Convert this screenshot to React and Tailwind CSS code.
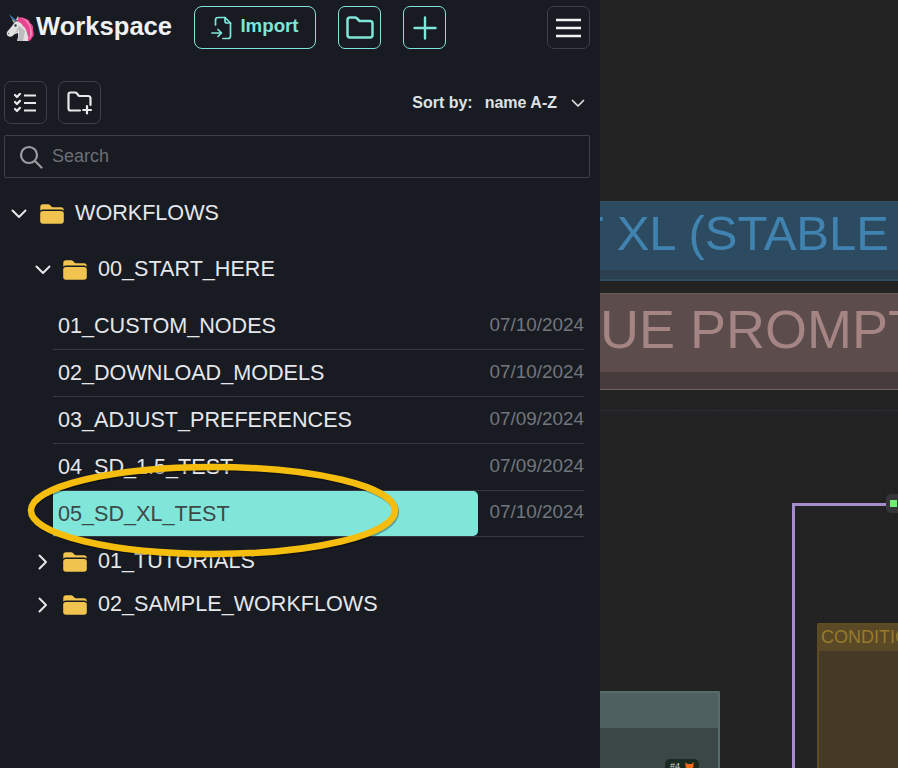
const Unicorn = () => (
  <svg width="30" height="30" viewBox="0 0 30 30" className="shrink-0">
    <path d="M9.5 11 L4 1 L12 8 Z" fill="#3f7fb0" />
    <path d="M8.5 9.5 L7 7 L10 8.5 Z" fill="#e8b44a" />
    <path d="M11 7 L13 3 L15 8 Z" fill="#e2e2e2" />
    <path d="M12 8 Q8 10 7 13 L2 19 Q1 22.5 4 23.5 Q7 24.5 9 21.5 L13 20 Q13.5 24 12 28 L24 28 Q27 20 22 13 Q18 7 12 8 Z" fill="#e0e0e0" />
    <path d="M9 21.5 Q12 19.5 14 16.5 L14 20 Q14 24 12 28 L18 28 L20 18 L14 13 Z" fill="#bcbcbc" />
    <path d="M13 5 Q17 3 21 6 Q24 6 25 10 Q29 12 28 17 Q30 22 27 25 Q26 28 23 28.5 Q24 24 22 20 Q21 15 18 13 Q16 9 12 8.5 Z" fill="#e8468f" />
    <path d="M16 5 Q20 6 22 10 Q25 13 25 18 Q26 22 24 26 L26 24 Q28 20 26 15 Q25 9 20 6 Z" fill="#f48ab8" />
    <circle cx="10.5" cy="12.5" r="1.2" fill="#333" />
    <circle cx="3.5" cy="20.5" r="0.7" fill="#666" />
  </svg>
);

const FolderSolid = () => (
  <svg width="24" height="20" viewBox="0 0 24 20" className="shrink-0">
    <path d="M0.3 5 V3 Q0.3 0.3 3 0.3 H8 Q9.3 0.3 10.2 1.3 L11.6 2.8 Q12 3.2 12.8 3.2 H21 Q23.7 3.2 23.7 6 V6.8 Q22.6 5.6 21 5.6 H3 Q1.3 5.6 0.3 6.8 Z" fill="#f0c44f" />
    <path d="M3 7 H21 Q23.8 7 23.8 9.8 V17 Q23.8 19.8 21 19.8 H3 Q0.2 19.8 0.2 17 V9.8 Q0.2 7 3 7 Z" fill="#f0c44f" />
  </svg>
);

const Chevron = ({ open }) => (
  <svg width="16" height="16" viewBox="0 0 16 16" fill="none" stroke="#e5e7eb" strokeWidth="2" strokeLinecap="round" strokeLinejoin="round" className="shrink-0">
    {open ? <path d="M1.5 4.5 L8 11 L14.5 4.5" /> : <path d="M4.5 1.5 L11 8 L4.5 14.5" />}
  </svg>
);

const Item = ({ name, date, active }) => (
  <div className={`flex border-b border-[#373a40] items-center ${active ? "h-[46px]" : "h-[47px]"}`}>
    <div className={active ? "flex-1 h-[45px] flex items-center pl-[5px] bg-[#80e6da] text-[#3d4848] rounded-r-[5px]" : "flex-1 flex items-center pl-[5px] text-[#e5e7eb]"}>
      <span className="text-[21.6px] leading-none">{name}</span>
    </div>
    <span className="w-[106px] text-right text-[18.9px] leading-none -mt-[2px] text-[#73767c]">{date}</span>
  </div>
);

const Btn = ({ teal, children, className = "" }) => (
  <div className={`h-[43px] flex items-center justify-center rounded-[7px] border ${teal ? "border-[#7fe5d9]" : "border-[#3c3f44]"} ${className}`}>
    {children}
  </div>
);

const Folder = ({ name, open, indent, gap }) => (
  <div className={`flex items-center h-[43px] ${indent}`}>
    <Chevron open={open} />
    <span className={gap}><FolderSolid /></span>
    <span className="ml-[11px] text-[21.6px] leading-none text-[#e5e7eb] -mt-px">{name}</span>
  </div>
);

export default function App() {
  return (
    <div className="relative w-[898px] h-[768px] overflow-hidden flex bg-[#222222] font-['Liberation_Sans',sans-serif]">
      <aside className="w-[600px] h-full shrink-0 bg-[#181b22] pt-[6px] relative">
        <header className="flex items-center h-[43px] pl-[5px] pr-[10px]">
          <Unicorn />
          <span className="ml-px w-[137px] text-[25.6px] font-bold text-[#f0f1f2] leading-none -mt-px">Workspace</span>
          <Btn teal className="ml-[21px] w-[122px] gap-[7px] rounded-[8px]">
            <svg width="22" height="24" viewBox="0 0 22 24" fill="none" stroke="#7fe5d9" strokeWidth="1.7" strokeLinecap="round" strokeLinejoin="round">
              <path d="M4.5 9 V4 Q4.5 1.5 7 1.5 H14 L19.5 7 V20 Q19.5 22.5 17 22.5 H12" />
              <path d="M14 1.5 V5 Q14 7 16 7 H19.5" />
              <path d="M1 17 H10 M7 13.5 L10.5 17 L7 20.5" />
            </svg>
            <span className="text-[18.7px] leading-none font-bold text-[#7fe5d9] -mt-[2px]">Import</span>
          </Btn>
          <Btn teal className="ml-[22px] w-[43px]">
            <svg width="28" height="23" viewBox="0 0 28 23" fill="none" stroke="#7fe5d9" strokeWidth="2.5" strokeLinejoin="round">
              <path d="M1.5 4 Q1.5 1.5 4 1.5 H9 Q10 1.5 11 2.5 L13.5 5 H24 Q26.5 5 26.5 7.5 V19 Q26.5 21.5 24 21.5 H4 Q1.5 21.5 1.5 19 Z" />
            </svg>
          </Btn>
          <Btn teal className="ml-[22px] w-[43px]">
            <svg width="24" height="24" viewBox="0 0 24 24" fill="none" stroke="#7fe5d9" strokeWidth="2.4" strokeLinecap="round">
              <path d="M12 1.5 V22.5 M1.5 12 H22.5" />
            </svg>
          </Btn>
          <Btn className="ml-auto w-[43px]">
            <svg width="25" height="20" viewBox="0 0 25 20" stroke="#f0f1f2" strokeWidth="2.6">
              <path d="M0 2 H25 M0 10 H25 M0 18 H25" />
            </svg>
          </Btn>
        </header>

        <div className="flex items-center h-[43px] mt-[32px] pl-[4px] pr-[5px]">
          <Btn className="w-[43px]">
            <svg width="23" height="20" viewBox="0 0 23 20" fill="none" stroke="#e8e9ea" strokeWidth="2.2" strokeLinecap="round" strokeLinejoin="round">
              <path d="M1 2 L3 4 L6 0.8 M1 9 L3 11 L6 7.8 M1 16 L3 18 L6 14.8" />
              <path d="M10 2.5 H22 M10 10 H22 M10 17.5 H22" strokeLinecap="butt" />
            </svg>
          </Btn>
          <Btn className="ml-[11px] w-[43px]">
            <svg width="26" height="24" viewBox="0 0 26 24" fill="none" stroke="#e8e9ea" strokeWidth="2.2" strokeLinecap="round" strokeLinejoin="round">
              <path d="M13 19.5 H3.5 Q1.5 19.5 1.5 17.5 V3.5 Q1.5 1.5 3.5 1.5 H8 Q9 1.5 9.7 2.3 L12 5 H21 Q23.5 5 23.5 7.5 V14" />
              <path d="M20 15 V22.5 M16.2 19 H24" />
            </svg>
          </Btn>
          <span className="ml-auto text-[16px] leading-none font-bold text-[#dfe1e3]">Sort by:</span>
          <span className="ml-[12px] text-[16px] leading-none font-bold text-[#dfe1e3]">name A-Z</span>
          <svg width="14" height="14" viewBox="0 0 14 14" fill="none" stroke="#dfe1e3" strokeWidth="1.7" strokeLinecap="round" strokeLinejoin="round" className="ml-[14px] mr-[10px]">
            <path d="M1.5 4.5 L7 10 L12.5 4.5" />
          </svg>
        </div>

        <div className="mt-[11px] ml-[4px] w-[586px] h-[43px] border border-[#3c3f44] rounded-[2px] flex items-center pl-[14px]">
          <svg width="24" height="24" viewBox="0 0 24 24" fill="none" stroke="#9a9da2" strokeWidth="2.2" strokeLinecap="round">
            <circle cx="10" cy="10" r="8" />
            <path d="M16 16 L22.5 22.5" />
          </svg>
          <span className="ml-[9px] text-[18px] text-[#6c6f75]">Search</span>
        </div>

        <div className="mt-[14px]">
          <Folder name="WORKFLOWS" open indent="pl-[11px]" gap="ml-[13px]" />
          <div className="mt-[13px]"><Folder name="00_START_HERE" open indent="pl-[35px]" gap="ml-[12px]" /></div>
          <div className="mt-[12px] ml-[53px] w-[531px]">
            <Item name="01_CUSTOM_NODES" date="07/10/2024" />
            <Item name="02_DOWNLOAD_MODELS" date="07/10/2024" />
            <Item name="03_ADJUST_PREFERENCES" date="07/09/2024" />
            <Item name="04_SD_1.5_TEST" date="07/09/2024" />
            <Item name="05_SD_XL_TEST" date="07/10/2024" active />
          </div>
          <div className="mt-[3px]">
            <Folder name="01_TUTORIALS" indent="pl-[35px]" gap="ml-[12px]" />
            <Folder name="02_SAMPLE_WORKFLOWS" indent="pl-[35px]" gap="ml-[12px]" />
          </div>
        </div>
      </aside>

      <main className="relative flex-1 h-full overflow-hidden bg-[#222222] bg-[linear-gradient(to_right,#242424_1px,transparent_1px)] bg-[size:10px_10px]">
        <div className="absolute left-0 top-[201px] w-full h-[80px] bg-[#2b3f4f] border-t border-[#33536a] border-b-2 border-b-[#2f4d60]">
          <div className="h-[68px] bg-[#2c4a60] overflow-hidden whitespace-nowrap">
            <span className="block -ml-[26px] text-[49px] leading-[63px] text-[#4183b0]">T XL (STABLE DIFFUSION)</span>
          </div>
        </div>
        <div className="absolute left-0 top-[293px] w-full h-[97px] bg-[#473b3b] border-t border-[#6b5757] border-b border-b-[#766363]">
          <div className="h-[78px] bg-[#5d4c4c] overflow-hidden whitespace-nowrap">
            <span className="block text-[54px] leading-[70px] text-[#a58484]">UE PROMPT</span>
          </div>
        </div>
        <div className="absolute left-0 top-[410px] w-full h-px bg-[#2a2c38]" />

        <div className="absolute left-[192px] top-[503px] w-[96px] h-[265px] border-l-[3px] border-t-[3px] border-[#a58ccb]" />
        <div className="absolute left-[286px] top-[494px] w-[12px] h-[19px] bg-[#35363a] rounded-l-[5px] flex items-center pl-[4px]">
          <div className="w-[7px] h-[7px] bg-[#6ff06f] shrink-0" />
        </div>

        <div className="absolute left-[217px] top-[623px] w-[81px] h-[145px] bg-[#453a26] border-l-2 border-t-2 border-[#5e4c22] rounded-tl-[2px]">
          <div className="h-[26px] bg-[#5a4927] overflow-hidden whitespace-nowrap pl-[2px]">
            <span className="text-[18px] leading-[24px] block text-[#987b2a]">CONDITIONING</span>
          </div>
        </div>

        <div className="absolute left-0 top-[691px] w-[120px] h-[77px] bg-[#3b4646] border-r-2 border-t-2 border-[#5a6b6b] rounded-tr-[2px]">
          <div className="h-[35px] bg-[#4e6060]" />
          <div className="absolute left-[65px] top-[66px] w-[34px] h-[12px] rounded-t-[5px] bg-[#1b2a20] flex items-start pt-[3px] pl-[5px] gap-[5px] overflow-hidden">
            <span className="text-[9px] leading-none text-[#c9cfca]">#4</span>
            <svg width="9" height="9" viewBox="0 0 9 9" className="shrink-0"><path d="M0.5 0 L2.5 2 H6.5 L8.5 0 V5 L4.5 9 L0.5 5 Z" fill="#f26a13" /></svg>
          </div>
        </div>
      </main>

      <svg width="898" height="768" viewBox="0 0 898 768" fill="none" className="absolute left-0 top-0 pointer-events-none">
        <ellipse cx="214" cy="512" rx="182" ry="43.5" stroke="#000000" strokeOpacity="0.3" strokeWidth="6.5" />
        <ellipse cx="213" cy="510.5" rx="182" ry="43.5" stroke="#f5bd0d" strokeWidth="6.5" />
      </svg>
    </div>
  );
}
